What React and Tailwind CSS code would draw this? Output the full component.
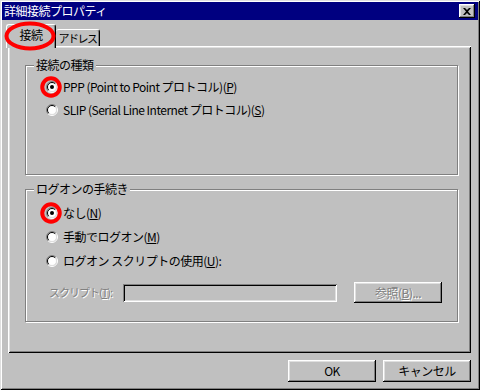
import React from "react";

const raised = "shadow-[inset_-1px_-1px_0_#000,inset_1px_1px_0_#fff,inset_-2px_-2px_0_#808080,inset_2px_2px_0_#dfdfdf]";
const etched = "border border-[#808080] shadow-[1px_1px_0_#fff,inset_1px_1px_0_#fff]";
const dim = "text-[#808080] [text-shadow:1px_1px_0_#fff]";

function Radio({ checked, marked }) {
  return (
    <span className="relative inline-block h-[12px] w-[12px] shrink-0">
      <svg width="12" height="12" viewBox="0 0 12 12" className="block">
        <circle cx="6" cy="6" r="4.5" fill="#fff" />
        <path d="M2.1 9.9 A5.5 5.5 0 0 1 9.9 2.1" stroke="#808080" fill="none" />
        <path d="M9.9 2.1 A5.5 5.5 0 0 1 2.1 9.9" stroke="#fff" fill="none" />
        <path d="M2.8 9.2 A4.5 4.5 0 0 1 9.2 2.8" stroke="#000" fill="none" />
        <path d="M9.2 2.8 A4.5 4.5 0 0 1 2.8 9.2" stroke="#dfdfdf" fill="none" />
        {checked && <circle cx="6" cy="6" r="2" fill="#000" />}
      </svg>
      {marked && (
        <svg className="absolute left-[-7px] top-[-6px]" width="24" height="24" viewBox="0 0 24 24">
          <circle cx="12" cy="12" r="8.75" stroke="#f00" strokeWidth="4" fill="none" />
        </svg>
      )}
    </span>
  );
}

function Option({ checked, marked, children }) {
  return (
    <div className="flex h-[16px] items-center">
      <Radio checked={checked} marked={marked} />
      <span className="ml-[5px] whitespace-nowrap leading-[16px]">{children}</span>
    </div>
  );
}

function Group({ title, className, children }) {
  return (
    <div className={`relative ${etched} ${className}`}>
      <span className="absolute -top-[9px] left-[8px] whitespace-nowrap bg-[#c0c0c0] px-[2px] leading-[16px]">{title}</span>
      {children}
    </div>
  );
}

export default function App() {
  return (
    <div className="relative flex h-[390px] w-[480px] flex-col bg-[#c0c0c0] p-[2px] text-[12px] tracking-[-0.5px] text-black font-['MS_UI_Gothic','Noto_Sans_CJK_JP',sans-serif] shadow-[inset_1px_1px_0_#dfdfdf,inset_-1px_-1px_0_#000,inset_2px_2px_0_#fff,inset_-2px_-2px_0_#808080]">
      {/* title bar */}
      <div className="flex h-[18px] shrink-0 items-center justify-between bg-[#000080] pl-[2px] pr-[3px]">
        <span className="whitespace-nowrap leading-[18px] text-white">詳細接続プロパティ</span>
        <button className={`flex h-[14px] w-[16px] items-center justify-center bg-[#c0c0c0] ${raised}`}>
          <svg width="8" height="7" viewBox="0 0 8 7">
            <path d="M0 0h2l2 2 2-2h2L5 3.5 8 7H6L4 5 2 7H0l3-3.5z" fill="#000" />
          </svg>
        </button>
      </div>

      <div className="flex flex-1 flex-col pl-[6px] pr-[7px]">
        {/* tabs */}
        <div className="relative z-10 flex h-[26px] shrink-0 items-end">
          <div className="-mb-[2px] -ml-[2px] flex h-[24px] w-[50px] items-center justify-center rounded-t-[3px] border-l border-r border-t border-l-white border-r-black border-t-white bg-[#c0c0c0] pb-[4px] shadow-[inset_-1px_0_0_#808080]">
            接続
          </div>
          <div className="flex h-[17px] w-[44px] items-center justify-center whitespace-nowrap rounded-t-[3px] border-r border-t border-r-black border-t-white bg-[#c0c0c0] text-[11px] tracking-[-1.5px] shadow-[inset_-1px_0_0_#808080]">
            アドレス
          </div>
        </div>

        {/* panel */}
        <div className="flex h-[307px] shrink-0 flex-col pl-[17px] pr-[13px] pt-[19px] shadow-[inset_1px_1px_0_#fff,inset_-1px_-1px_0_#000,inset_2px_2px_0_#dfdfdf,inset_-2px_-2px_0_#808080]">
          <Group title="接続の種類" className="h-[110px] pl-[20px] pt-[13px]">
            <div className="flex flex-col gap-[7px]">
              <Option checked marked>PPP (Point to Point プロトコル)(<u>P</u>)</Option>
              <Option>SLIP (Serial Line Internet プロトコル)(<u>S</u>)</Option>
            </div>
          </Group>

          <Group title="ログオンの手続き" className="mt-[14px] h-[133px] pl-[20px] pt-[15px]">
            <div className="flex flex-col gap-[8px]">
              <Option checked marked>なし(<u>N</u>)</Option>
              <Option>手動でログオン(<u>M</u>)</Option>
              <Option>ログオン スクリプトの使用(<u>U</u>):</Option>
            </div>
            <div className="ml-[3px] mt-[13px] flex h-[21px] items-center">
              <span className={`w-[74px] whitespace-nowrap text-[11px] tracking-[-1px] ${dim}`}>スクリプト(<u>T</u>):</span>
              <div className="h-[18px] w-[214px] bg-[#c0c0c0] shadow-[inset_1px_1px_0_#808080,inset_-1px_-1px_0_#fff,inset_2px_2px_0_#000,inset_-2px_-2px_0_#dfdfdf]" />
              <button className={`ml-[17px] flex h-[21px] w-[88px] items-center justify-center whitespace-nowrap bg-[#c0c0c0] ${raised} ${dim}`}>
                参照(<u>B</u>)...
              </button>
            </div>
          </Group>
        </div>

        {/* buttons */}
        <div className="mt-[7px] flex justify-end gap-[7px]">
          <button className={`flex h-[22px] w-[88px] items-center justify-center bg-[#c0c0c0] ${raised}`}>OK</button>
          <button className={`flex h-[22px] w-[88px] items-center justify-center whitespace-nowrap bg-[#c0c0c0] ${raised}`}>キャンセル</button>
        </div>
      </div>

      {/* annotation on the selected tab */}
      <svg className="pointer-events-none absolute left-[4px] top-[21px] z-20" width="52" height="30" viewBox="0 0 52 30">
        <ellipse cx="26" cy="15" rx="23.5" ry="12.5" stroke="#f00" strokeWidth="4" fill="none" />
      </svg>
    </div>
  );
}
